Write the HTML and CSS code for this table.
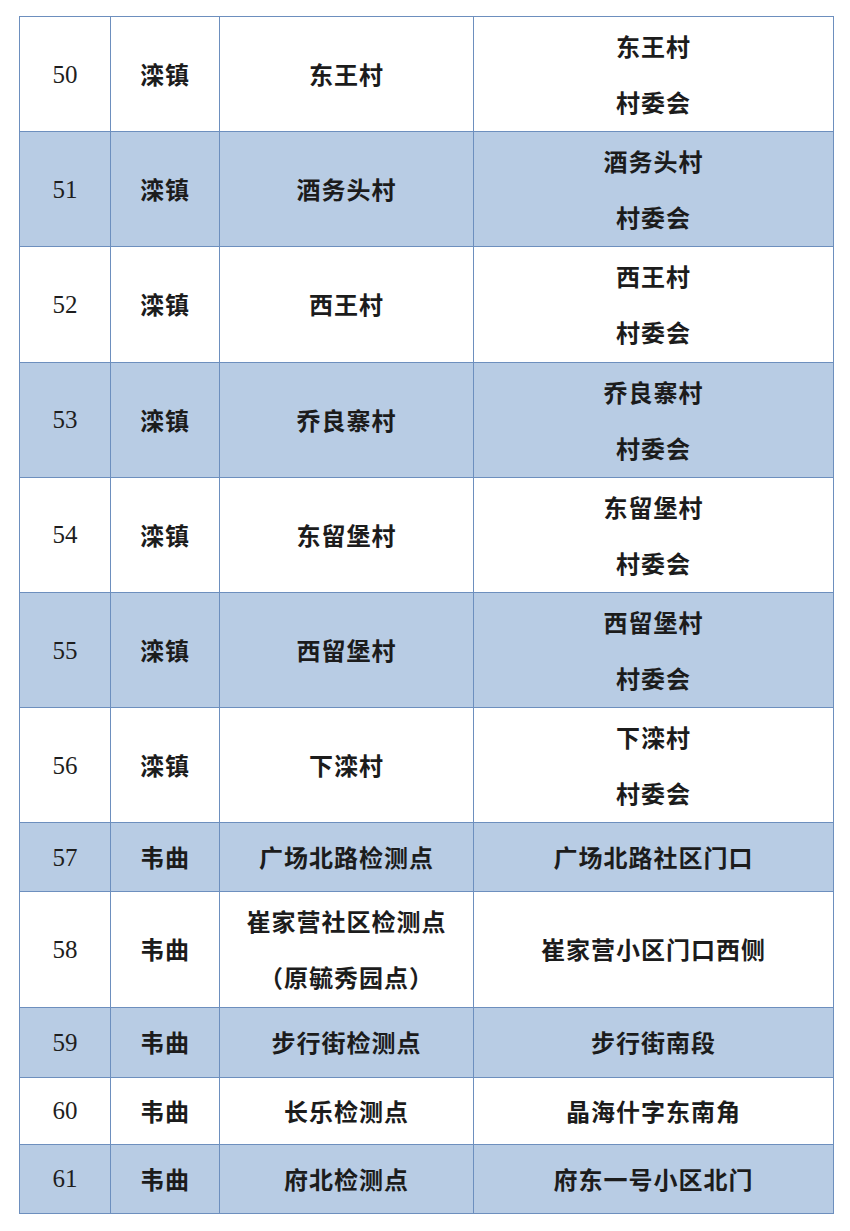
FILE: index.html
```html
<!DOCTYPE html>
<html lang="zh">
<head>
<meta charset="utf-8">
<link rel="stylesheet" href="styles.css">
</head>
<body>
<table class="sheet">
  <colgroup>
    <col class="c1"><col class="c2"><col class="c3"><col class="c4">
  </colgroup>
  <tbody>
    <tr class="tall"><td class="num">50</td><td>滦镇</td><td>东王村</td><td><div class="two">东王村<br>村委会</div></td></tr>
    <tr class="tall blue"><td class="num">51</td><td>滦镇</td><td>酒务头村</td><td><div class="two">酒务头村<br>村委会</div></td></tr>
    <tr class="tall"><td class="num">52</td><td>滦镇</td><td>西王村</td><td><div class="two">西王村<br>村委会</div></td></tr>
    <tr class="tall blue"><td class="num">53</td><td>滦镇</td><td>乔良寨村</td><td><div class="two">乔良寨村<br>村委会</div></td></tr>
    <tr class="tall"><td class="num">54</td><td>滦镇</td><td>东留堡村</td><td><div class="two">东留堡村<br>村委会</div></td></tr>
    <tr class="tall blue"><td class="num">55</td><td>滦镇</td><td>西留堡村</td><td><div class="two">西留堡村<br>村委会</div></td></tr>
    <tr class="tall"><td class="num">56</td><td>滦镇</td><td>下滦村</td><td><div class="two">下滦村<br>村委会</div></td></tr>
    <tr class="r57 blue"><td class="num">57</td><td>韦曲</td><td>广场北路检测点</td><td>广场北路社区门口</td></tr>
    <tr class="tall"><td class="num">58</td><td>韦曲</td><td><div class="two">崔家营社区检测点<br>（原毓秀园点）</div></td><td>崔家营小区门口西侧</td></tr>
    <tr class="r59 blue"><td class="num">59</td><td>韦曲</td><td>步行街检测点</td><td>步行街南段</td></tr>
    <tr class="r60"><td class="num">60</td><td>韦曲</td><td>长乐检测点</td><td>晶海什字东南角</td></tr>
    <tr class="r61 blue"><td class="num">61</td><td>韦曲</td><td>府北检测点</td><td>府东一号小区北门</td></tr>
  </tbody>
</table>
</body>
</html>
```
FILE: styles.css
```css
html, body {
  margin: 0;
  padding: 0;
  background: #ffffff;
}
body {
  padding: 16px 0 0 19px;
}
.sheet {
  border-collapse: collapse;
  table-layout: fixed;
  width: 814px;
  font-family: "Noto Sans CJK SC", "Noto Sans", sans-serif;
  font-size: 24px;
  font-weight: 700;
  color: #1c1c1c;
  letter-spacing: 1px;
}
.c1 { width: 91px; }
.c2 { width: 109px; }
.c3 { width: 254px; }
.c4 { width: 360px; }
.sheet td {
  border: 1.5px solid #6d8fbe;
  text-align: center;
  vertical-align: middle;
  padding: 0;
  line-height: 1;
}
.sheet .num {
  font-family: "Liberation Serif", "Times New Roman", serif;
  font-weight: 400;
  font-size: 25px;
  letter-spacing: 0;
  color: #1e1e1e;
}
.tall { height: 115.2px; }
.r57 { height: 69px; }
.r59 { height: 70px; }
.r60 { height: 67px; }
.r61 { height: 69.5px; }
.blue td { background: #b8cce4; }
.two {
  line-height: 56px;
}
```
